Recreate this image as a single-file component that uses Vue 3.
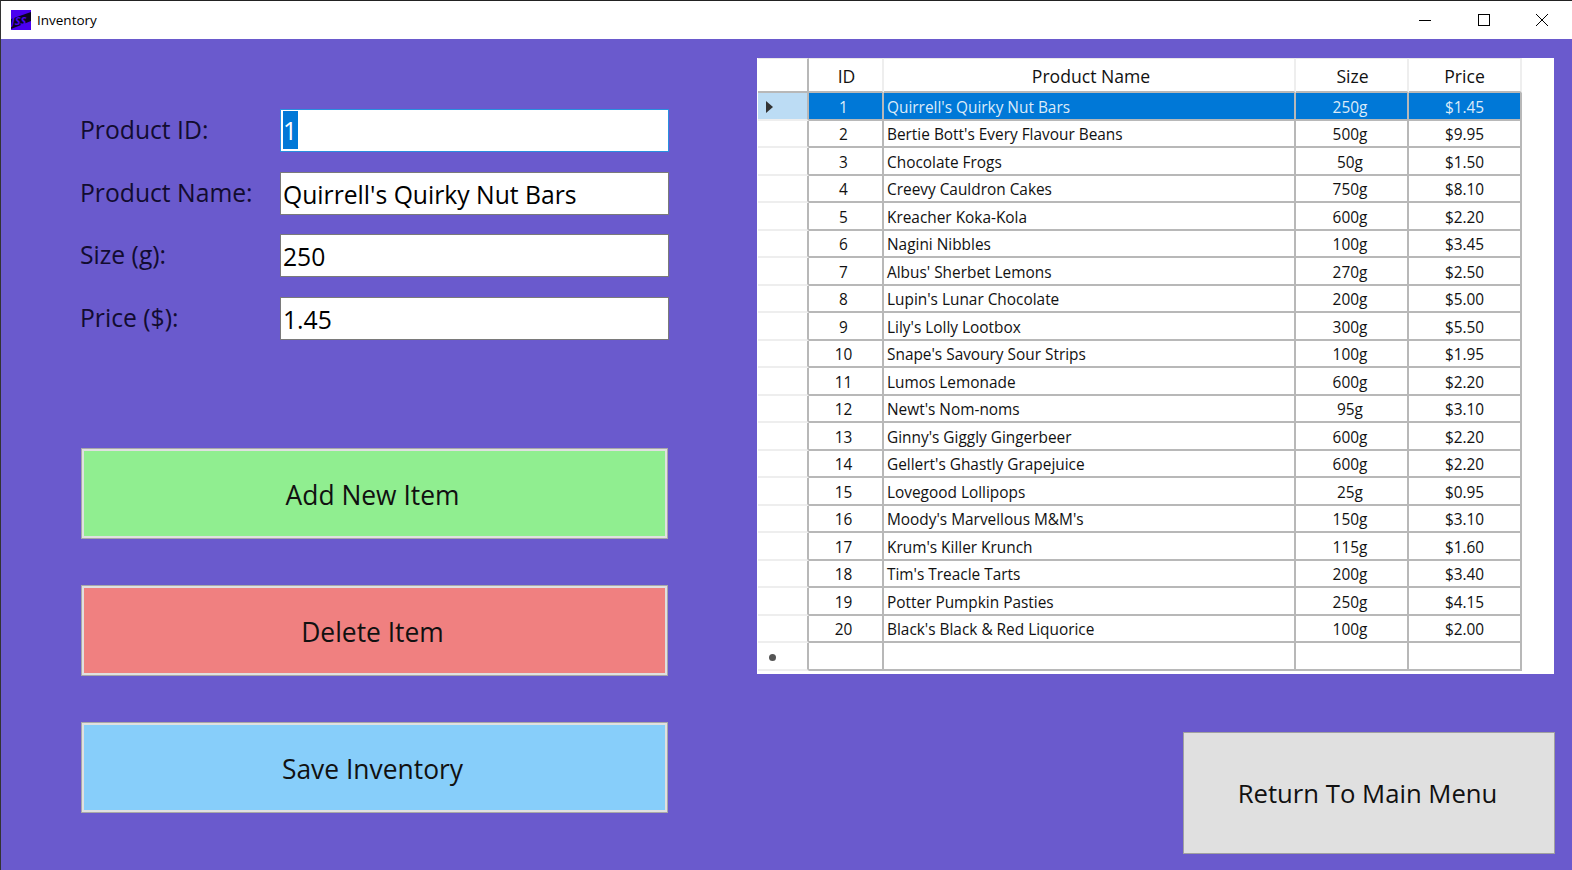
<template>
  <div class="window">
    <div class="titlebar">
      <svg class="app-icon" width="20" height="20" viewBox="0 0 20 20">
        <rect width="20" height="20" fill="#4a00f0" />
        <path d="M0 9 L20 2 V11 L0 19 Z" fill="#0c0420" />
        <text x="0" y="15" class="logo-text">JSS</text>
      </svg>
      <span class="title">Inventory</span>
      <div class="controls">
        <svg width="12" height="12" viewBox="0 0 12 12"><path d="M0 6.5H12" stroke="#000" fill="none" /></svg>
        <svg width="12" height="12" viewBox="0 0 12 12"><rect x="0.5" y="0.5" width="11" height="11" stroke="#000" fill="none" /></svg>
        <svg width="12" height="12" viewBox="0 0 12 12"><path d="M0 0L12 12M12 0L0 12" stroke="#000" fill="none" /></svg>
      </div>
    </div>

    <div class="content">
      <div class="left">
        <div class="form">
          <div v-for="f in fields" :key="f.label" class="field">
            <label>{{ f.label }}</label>
            <div class="input" :class="{ focused: f.focused }">
              <span :class="{ selected: f.focused }">{{ f.value }}</span>
            </div>
          </div>
        </div>
        <div class="actions">
          <button v-for="b in buttons" :key="b.text" type="button" class="action" :style="{ background: b.color }">
            {{ b.text }}
          </button>
        </div>
      </div>

      <div class="right">
        <div class="grid-wrap">
          <div class="grid">
            <div class="row head">
              <div class="c rh"></div>
              <div class="c id">ID</div>
              <div class="c name center">Product Name</div>
              <div class="c size">Size</div>
              <div class="c price">Price</div>
            </div>
            <div v-for="(p, i) in products" :key="p[0]" class="row body" :class="{ current: i === 0 }">
              <div class="c rh">
                <svg v-if="i === 0" width="8" height="12" viewBox="0 0 8 12"><path d="M0 0L7 6L0 12Z" fill="#333" /></svg>
              </div>
              <div class="c id">{{ i + 1 }}</div>
              <div class="c name">{{ p[0] }}</div>
              <div class="c size">{{ p[1] }}</div>
              <div class="c price">{{ p[2] }}</div>
            </div>
            <div class="row body last">
              <div class="c rh"><span class="star"></span></div>
              <div class="c id"></div>
              <div class="c name"></div>
              <div class="c size"></div>
              <div class="c price"></div>
            </div>
          </div>
        </div>
        <button type="button" class="return">Return To Main Menu</button>
      </div>
    </div>
  </div>
</template>

<script setup>
const fields = [
  { label: 'Product ID:', value: '1', focused: true },
  { label: 'Product Name:', value: "Quirrell's Quirky Nut Bars" },
  { label: 'Size (g):', value: '250' },
  { label: 'Price ($):', value: '1.45' }
]

const buttons = [
  { text: 'Add New Item', color: '#90ee90' },
  { text: 'Delete Item', color: '#f08080' },
  { text: 'Save Inventory', color: '#87cefa' }
]

const products = [
  ["Quirrell's Quirky Nut Bars", '250g', '$1.45'],
  ["Bertie Bott's Every Flavour Beans", '500g', '$9.95'],
  ['Chocolate Frogs', '50g', '$1.50'],
  ['Creevy Cauldron Cakes', '750g', '$8.10'],
  ['Kreacher Koka-Kola', '600g', '$2.20'],
  ['Nagini Nibbles', '100g', '$3.45'],
  ["Albus' Sherbet Lemons", '270g', '$2.50'],
  ["Lupin's Lunar Chocolate", '200g', '$5.00'],
  ["Lily's Lolly Lootbox", '300g', '$5.50'],
  ["Snape's Savoury Sour Strips", '100g', '$1.95'],
  ['Lumos Lemonade', '600g', '$2.20'],
  ["Newt's Nom-noms", '95g', '$3.10'],
  ["Ginny's Giggly Gingerbeer", '600g', '$2.20'],
  ["Gellert's Ghastly Grapejuice", '600g', '$2.20'],
  ['Lovegood Lollipops', '25g', '$0.95'],
  ["Moody's Marvellous M&M's", '150g', '$3.10'],
  ["Krum's Killer Krunch", '115g', '$1.60'],
  ["Tim's Treacle Tarts", '200g', '$3.40'],
  ['Potter Pumpkin Pasties', '250g', '$4.15'],
  ["Black's Black & Red Liquorice", '100g', '$2.00']
]
</script>

<style>
html, body {
  margin: 0;
  background: #6a5acd;
}
</style>

<style scoped>
.window {
  width: 1572px;
  height: 870px;
  box-sizing: border-box;
  border-top: 1px solid #222;
  border-left: 1px solid #333;
  display: flex;
  flex-direction: column;
  overflow: hidden;
  font-family: "Open Sans", "Noto Sans", sans-serif;
  color: #000;
  background: #6a5acd;
}

.titlebar {
  height: 38px;
  flex: none;
  background: #fff;
  display: flex;
  align-items: center;
  padding-left: 10px;
}

.logo-text {
  font-size: 11px;
  font-style: italic;
  font-weight: 700;
  fill: #4a00f0;
}

.title {
  margin-left: 6px;
  padding-bottom: 1px;
  font-size: 13.5px;
}

.controls {
  margin-left: auto;
  display: flex;
  gap: 46.5px;
  padding-right: 24px;
}

.content {
  flex: 1;
  display: flex;
  padding-top: 19px;
}

.left {
  width: 756px;
  flex: none;
  padding: 51px 0 0 79px;
  box-sizing: border-box;
}

.field {
  display: flex;
  align-items: center;
  height: 43px;
  margin-bottom: 19.5px;
}

.field label {
  width: 200px;
  font-size: 24.7px;
  color: #120c30;
  position: relative;
  top: -1px;
}

.input {
  width: 389px;
  height: 43px;
  box-sizing: border-box;
  background: #fff;
  border: 1px solid #7a7a7a;
  padding-left: 2px;
  font-size: 24.7px;
  line-height: 44px;
  white-space: nowrap;
  overflow: hidden;
}

.input.focused {
  border-color: #2a8fe0;
}

.selected {
  display: inline-block;
  height: 38px;
  line-height: 40px;
  margin-top: 1px;
  padding-right: 1px;
  vertical-align: top;
  background: #0078d7;
  color: #fff;
}

.actions {
  margin: 108.5px 0 0 1px;
  display: flex;
  flex-direction: column;
  gap: 46px;
}

.action {
  width: 587px;
  height: 91px;
  margin: 0;
  padding: 2px 4px 0 0;
  box-sizing: border-box;
  border: 3px solid #e0e0e0;
  outline: 1px solid #a8a8a8;
  outline-offset: -1px;
  font-family: inherit;
  font-size: 26.4px;
  color: #111;
}

.right {
  flex: 1;
  display: flex;
  flex-direction: column;
  align-items: flex-start;
}

.grid-wrap {
  width: 797px;
  height: 616px;
  background: #fff;
  box-sizing: border-box;
  padding: 0 0 0 1px;
}

.grid {
  width: 764px;
  display: flex;
  flex-direction: column;
  font-size: 15.4px;
  color: #111;
}

.row {
  display: flex;
  height: 27.5px;
  flex: none;
}

.head {
  height: 35px;
  font-size: 17.6px;
}

.c {
  box-sizing: border-box;
  display: flex;
  align-items: center;
  justify-content: center;
  padding-top: 3px;
  border-right: 2px solid #b8b8b8;
  border-bottom: 2px solid #b8b8b8;
  white-space: nowrap;
  overflow: hidden;
}

.head .c {
  padding-top: 2px;
  border-top: 1px solid #e8e8e8;
  border-right: 2px solid #eee;
  border-bottom: 2px solid #b8b8b8;
}

.c.rh {
  width: 51px;
  border-bottom-color: #eee;
  justify-content: flex-start;
  padding-top: 2px;
  padding-left: 8px;
}

.head .rh {
  border-right-color: #b8b8b8;
  border-bottom-color: #b8b8b8;
}

.id { width: 75px; }
.name { width: 412px; justify-content: flex-start; padding-left: 3px; }
.name.center { justify-content: center; padding-left: 4px; }
.size { width: 113px; }
.price { width: 113px; }

.head .id { padding-left: 2px; }
.head .size { padding-left: 2px; }
.body .id { padding-right: 4px; }
.body .size { padding-right: 3px; }

.current .c {
  background: #0078d7;
  color: #dcebf9;
}

.current .c.rh {
  background: #bcdcf4;
}

.star {
  width: 7px;
  height: 7px;
  margin: 2px 0 0 3px;
  border-radius: 50%;
  background: #555;
}

.return {
  margin: 58px 0 0 426px;
  width: 372px;
  height: 122px;
  box-sizing: border-box;
  padding: 0 3px 0 0;
  border: 1px solid #a0a0a0;
  background: #e0e0e0;
  font-family: inherit;
  font-size: 25.7px;
  color: #111;
}
</style>
